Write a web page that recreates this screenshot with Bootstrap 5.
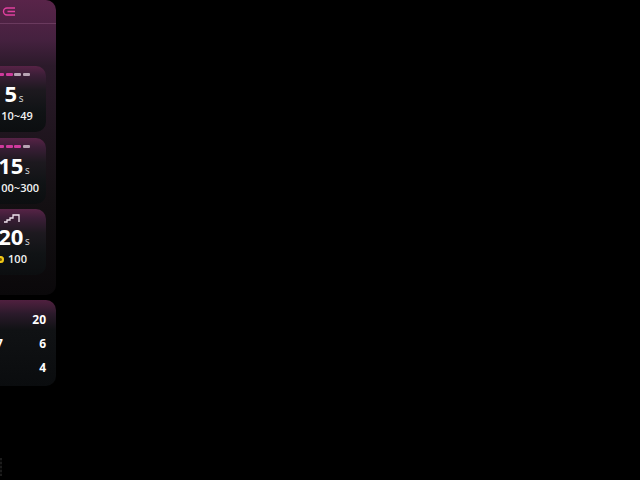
<!DOCTYPE html>
<html lang="en">
<head>
<meta charset="utf-8">
<title>Stats</title>
<link href="https://cdn.jsdelivr.net/npm/bootstrap@5.3.0/dist/css/bootstrap.min.css" rel="stylesheet">
<style>
html,body{background:#000;height:100%;overflow:hidden}
body{font-family:"Open Sans","Noto Sans",sans-serif;color:#fff;position:relative}
.shell{width:100px;margin-left:-44px}
.top-panel{height:295px;border-radius:0 10px 10px 0;background:linear-gradient(180deg,#592449 0,#45213f 40px,#2b1a2a 66px,#141013 200px,#0a080a 100%);padding-left:32px;padding-right:10px}
.top-head{height:24px;border-bottom:1px solid #6a3a5e;margin:0 -10px 0 -32px;padding-left:46px;padding-top:7px;line-height:0}
.tier-list{padding-top:42px;gap:5.5px}
.tier{height:66px;border-radius:10px;background:linear-gradient(180deg,#572346 0,#3b1e37 9px,#1d191f 24px,#101315 45px,#0c0e10 100%)}
.tier-top{height:16px;padding-left:9px;padding-top:7px;gap:1.5px}
.step-row{padding-right:8px}
.dash{width:7px;height:3px;background:#cf3a9c;border-radius:1px}
.dash.dim{background:#b8a4b4}
.tier-time{font-weight:700;font-size:22px;line-height:28px;margin-top:-3px;text-align:center;padding-right:6px}
.tier-time span{font-size:10px;font-weight:400;color:#ddd;margin-left:1.5px}
.tier-foot{font-size:11px;line-height:15px;font-weight:600;text-align:center;margin-top:-4px;color:#f2f2f2}
.foot-shift{padding-right:10px}
.coin{display:inline-block;width:7px;height:7px;border-radius:50%;background:#7a5a00;box-shadow:inset 0 0 0 2px #f0c818;margin-right:4px}
.bottom-panel{margin-top:5px;height:86px;border-radius:0 10px 10px 0;background:linear-gradient(180deg,#50203f 0,#2a1a2a 14px,#101214 30px,#0a0c0e 100%);padding:8px 10px 0 0}
.stat-line{height:24px;font-size:12px;font-weight:700;line-height:24px;padding-left:40px}
.faint{position:absolute;left:0;top:458px;width:2px;height:18px;background:repeating-linear-gradient(180deg,#1c1c1c 0 2px,#090909 2px 4px)}
</style>
</head>
<body>
<div class="shell d-flex flex-column">
  <div class="top-panel">
    <div class="top-head">
      <svg width="14" height="9" viewBox="0 0 14 9" fill="none" stroke="#e0409f" stroke-width="1.4"><path d="M13 1H5a3.5 3.5 0 0 0 0 7h8M5.5 4.5H13"/></svg>
    </div>
    <div class="tier-list d-flex flex-column">
      <div class="tier">
        <div class="tier-top d-flex"><i class="dash"></i><i class="dash"></i><i class="dash dim"></i><i class="dash dim"></i></div>
        <div class="tier-time">5<span>s</span></div>
        <div class="tier-foot">10~49</div>
      </div>
      <div class="tier">
        <div class="tier-top d-flex"><i class="dash"></i><i class="dash"></i><i class="dash"></i><i class="dash dim"></i></div>
        <div class="tier-time">15<span>s</span></div>
        <div class="tier-foot">100~300</div>
      </div>
      <div class="tier">
        <div class="tier-top step-row d-flex ps-0 pt-1 justify-content-center">
          <svg width="18" height="10" viewBox="0 0 18 10" fill="none" stroke="#f0e4ee" stroke-width="1.3"><path d="M0 9h3V7h3V5h3V2h6v7"/></svg>
        </div>
        <div class="tier-time">20<span>s</span></div>
        <div class="tier-foot foot-shift"><i class="coin"></i>100</div>
      </div>
    </div>
  </div>
  <div class="bottom-panel">
    <div class="stat-line d-flex justify-content-between"><span></span><span>20</span></div>
    <div class="stat-line d-flex justify-content-between"><span>7</span><span>6</span></div>
    <div class="stat-line d-flex justify-content-between"><span></span><span>4</span></div>
  </div>
</div>
<div class="faint"></div>
<script src="https://cdn.jsdelivr.net/npm/bootstrap@5.3.0/dist/js/bootstrap.bundle.min.js"></script>
</body>
</html>
